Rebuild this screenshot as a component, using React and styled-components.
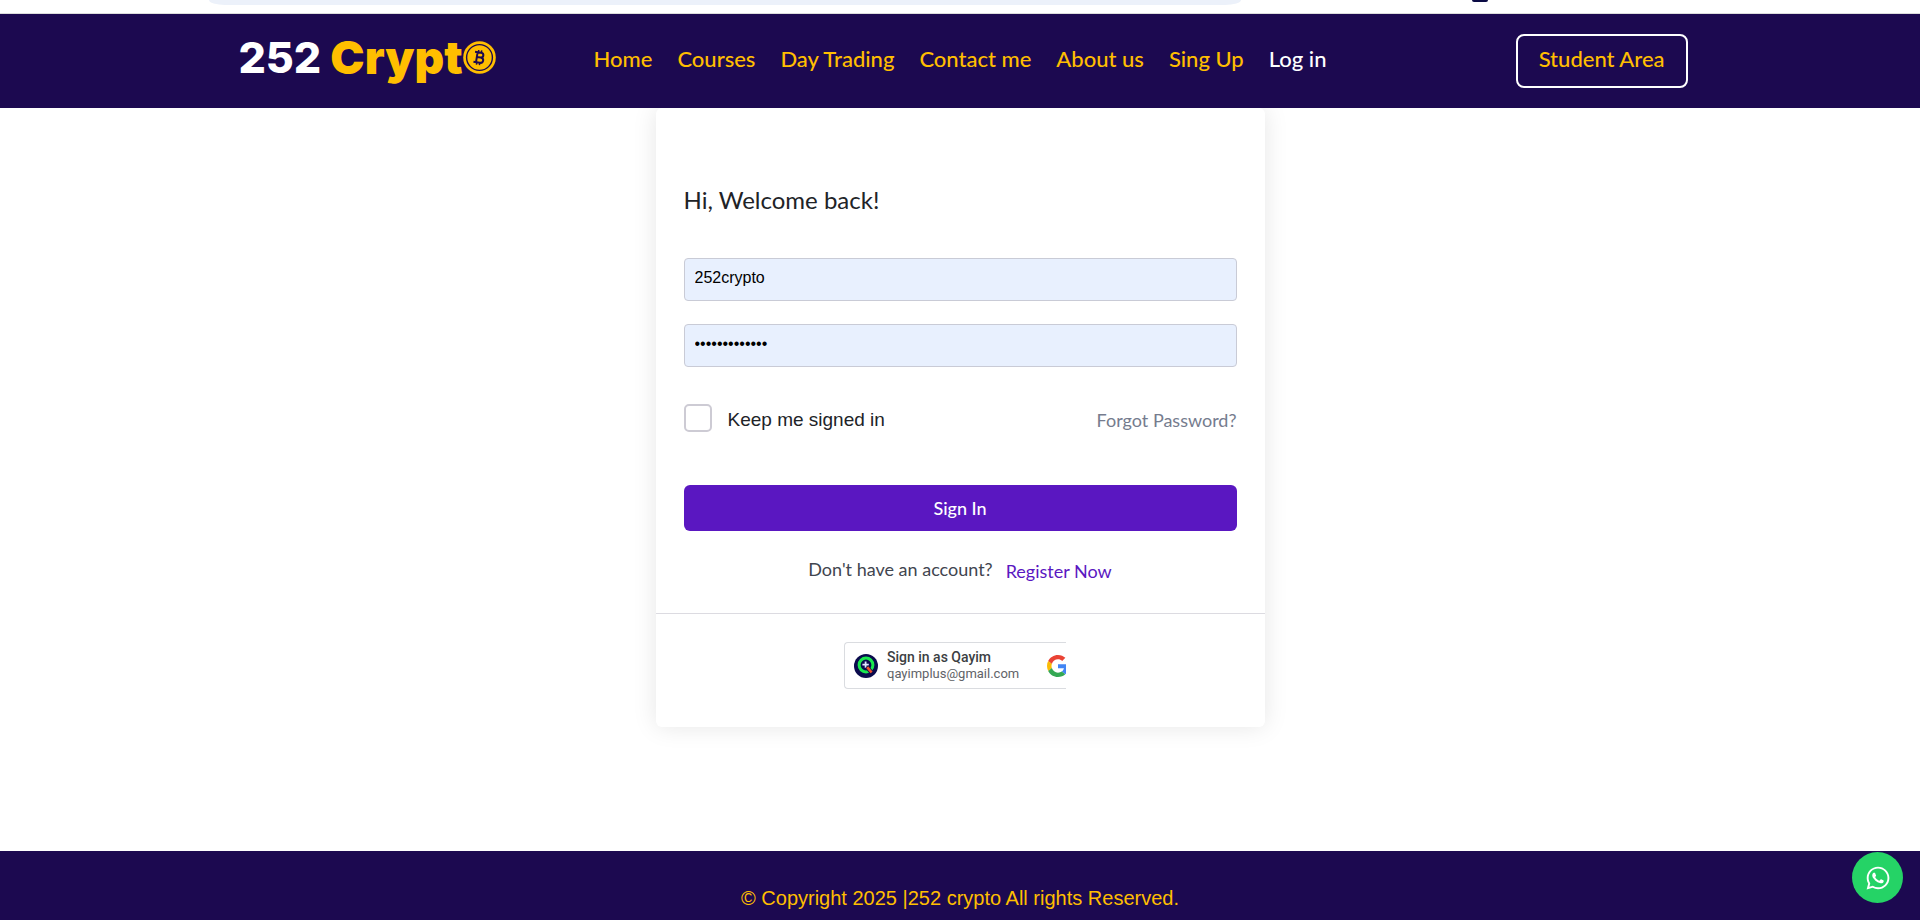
import React from "react";
import styled, { createGlobalStyle } from "styled-components";
import { FaWhatsapp } from "react-icons/fa";

const navy = "#1c0950";
const gold = "#ffbe00";
const violet = "#5a17c1";

const Global = createGlobalStyle`
  *, *::before, *::after { box-sizing: border-box; }
  body { margin: 0; background: #fff; color: #212327; font-family: "Liberation Sans", Arial, sans-serif; }
  a { text-decoration: none; }
  p, h1 { margin: 0; font-weight: 400; }
`;

const Page = styled.div`
  min-height: 100vh;
  display: flex;
  flex-direction: column;
  overflow: hidden;
`;

const TopStrip = styled.div`
  height: 14px;
  display: flex;
  align-items: flex-start;
  padding-left: 209px;
  border-bottom: 1px solid #dcdcdc;
`;

const AddressPill = styled.div`
  width: 1032px;
  height: 5px;
  background: #ecf1fa;
  border-radius: 0 0 16px 16px / 0 0 5px 5px;
`;

const ProfileEdge = styled.div`
  width: 16px;
  height: 2px;
  margin-left: 231px;
  background: #0b0b45;
  border-radius: 0 0 4px 4px;
`;

const Header = styled.header`
  position: relative;
  z-index: 1;
  height: 94px;
  padding: 0 12%;
  display: grid;
  grid-template-columns: 1fr auto 1fr;
  align-items: center;
  background: ${navy};
`;

const Logo = styled.a`
  display: flex;
  align-items: center;
  gap: 9px;
  padding: 0 0 8px 8px;
  color: #fff;
  font: 800 43px/56px Inter, sans-serif;
  white-space: nowrap;
`;

const LogoName = styled.span`
  display: flex;
  align-items: center;
  color: ${gold};
  font-size: 46px;
  font-weight: 900;
`;

const Nav = styled.nav`
  display: flex;
  gap: 25px;
  padding-bottom: 4px;
`;

const NavLink = styled.a`
  color: ${(p) => (p.$active ? "#fff" : gold)};
  font: 500 22px/26px Lato, sans-serif;
  white-space: nowrap;
`;

const StudentLink = styled.a`
  justify-self: end;
  display: flex;
  align-items: center;
  justify-content: center;
  width: 172px;
  height: 54px;
  margin-right: 2px;
  padding-bottom: 4px;
  border: 2px solid #fff;
  border-radius: 8px;
  color: ${gold};
  font: 500 22px/26px Lato, sans-serif;
`;

const Main = styled.main`
  flex: 1;
  display: flex;
  justify-content: center;
  align-items: flex-start;
  padding-bottom: 123px;
`;

const Card = styled.section`
  width: 609px;
  max-width: 100%;
  border-radius: 6px;
  background: #fff;
  box-shadow: 0 0 24px rgba(0, 0, 0, 0.1);
`;

const Form = styled.form`
  display: flex;
  flex-direction: column;
  padding: 76px 28px 26px;
`;

const Title = styled.h1`
  font: 400 24px/32px Lato, sans-serif;
  margin-bottom: 42px;
`;

const Field = styled.input`
  height: 43px;
  margin-bottom: 23px;
  padding: 0 10px 4px;
  border: 1px solid #c9cbd6;
  border-radius: 4px;
  background: #e8f0fe;
  color: #000;
  font: 16px "Liberation Sans", Arial, sans-serif;
`;

const Options = styled.div`
  display: flex;
  align-items: flex-start;
  justify-content: space-between;
  margin: 14px 0 49px;
`;

const Remember = styled.label`
  display: flex;
  align-items: flex-start;
  gap: 16px;
  font-size: 19px;
  line-height: 32px;
`;

const Tick = styled.input`
  appearance: none;
  width: 28px;
  height: 28px;
  margin: 0;
  border: 2px solid #cdcbd4;
  border-radius: 5px;
  background: #fff;
`;

const TextLink = styled.a`
  color: ${(p) => (p.$accent ? violet : "#757c8e")};
  font: 400 18px/32px Lato, sans-serif;
`;

const Submit = styled.button`
  height: 46px;
  border: 0;
  border-radius: 6px;
  background: ${violet};
  color: #fff;
  font: 500 18px Lato, sans-serif;
`;

const Register = styled.p`
  display: flex;
  justify-content: center;
  gap: 13px;
  margin-top: 24px;
  color: #41454f;
  font: 400 18px/28px Lato, sans-serif;
`;

const Social = styled.div`
  display: flex;
  justify-content: center;
  padding: 28px 10px 38px 0;
  border-top: 1px solid #dcdbe1;
`;

const GoogleButton = styled.button`
  display: flex;
  align-items: center;
  width: 222px;
  height: 47px;
  padding: 0 0 0 9px;
  overflow: hidden;
  border: 1px solid #dadce0;
  border-right: 0;
  border-radius: 4px 0 0 4px;
  background: #fff;
  text-align: left;
`;

const Account = styled.span`
  flex: 1;
  display: flex;
  flex-direction: column;
  margin-left: 9px;
  color: #5f6368;
  font: 400 13px/16px Roboto, sans-serif;
  white-space: nowrap;
`;

const AccountName = styled.span`
  color: #3c4043;
  font-weight: 500;
  font-size: 14px;
  line-height: 17px;
`;

const Footer = styled.footer`
  height: 69px;
  padding-top: 35px;
  background: ${navy};
  color: ${gold};
  font-size: 20px;
  line-height: 24px;
  text-align: center;
`;

const Chat = styled.a`
  position: fixed;
  right: 17px;
  bottom: 17px;
  width: 51px;
  height: 51px;
  display: flex;
  align-items: center;
  justify-content: center;
  border-radius: 50%;
  background: #25d366;
  color: #fff;
`;

const Coin = () => (
  <svg width="33" height="33" viewBox="0 0 33 33" aria-hidden="true">
    <circle cx="16.5" cy="16.5" r="16.3" fill={gold} />
    <circle cx="16.5" cy="16.5" r="12.9" fill="none" stroke={navy} strokeWidth="1.4" />
    <g transform="rotate(9 16.5 16.5)" fill="none" stroke={navy} strokeWidth="2">
      <path d="M13.8 11.5v10.2M11.2 11.5h6.2c3.4 0 3.4 4.8 0 4.8h-3.4M17.6 16.3c4 0 4 5.4 0 5.4h-6.4" />
      <path d="M14.6 9.2v2.4M17.6 9.2v2.4M14.6 21.5v2.6M17.6 21.5v2.6" strokeWidth="1.5" />
    </g>
  </svg>
);

const Avatar = () => (
  <svg width="24" height="24" viewBox="0 0 24 24" aria-hidden="true">
    <circle cx="12" cy="12" r="12" fill="#0b0b4d" />
    <circle cx="12" cy="11" r="6.9" fill="none" stroke="#1be84f" strokeWidth="3" />
    <path d="M11.6 7.4v6.4M8.4 10.6h6.4" stroke="#dfe6ff" strokeWidth="1.8" />
    <path d="M12.8 12.8l4.8 5.8" stroke="#0b0b4d" strokeWidth="4.2" />
    <path d="M13.2 13.2l4.4 5.3" stroke="#f2502c" strokeWidth="2.6" />
  </svg>
);

const GoogleMark = () => (
  <svg width="22" height="22" viewBox="0 0 48 48" aria-hidden="true">
    <path fill="#EA4335" d="M24 9.5c3.54 0 6.71 1.22 9.21 3.6l6.85-6.85C35.9 2.38 30.47 0 24 0 14.62 0 6.51 5.38 2.56 13.22l7.98 6.19C12.43 13.72 17.74 9.5 24 9.5z" />
    <path fill="#4285F4" d="M46.98 24.55c0-1.57-.15-3.09-.38-4.55H24v9.02h12.94c-.58 2.96-2.26 5.48-4.78 7.18l7.73 6c4.51-4.18 7.09-10.36 7.09-17.65z" />
    <path fill="#FBBC05" d="M10.53 28.59c-.48-1.45-.76-2.99-.76-4.59s.27-3.14.76-4.59l-7.98-6.19C.92 16.46 0 20.12 0 24c0 3.88.92 7.54 2.56 10.78l7.97-6.19z" />
    <path fill="#34A853" d="M24 48c6.48 0 11.93-2.13 15.89-5.81l-7.73-6c-2.15 1.45-4.92 2.3-8.16 2.3-6.26 0-11.57-4.22-13.47-9.91l-7.98 6.19C6.51 42.62 14.62 48 24 48z" />
  </svg>
);

const MarkSlot = styled.span`
  display: flex;
  width: 19px;
  overflow: hidden;
  svg { flex: none; }
`;

const links = ["Home", "Courses", "Day Trading", "Contact me", "About us", "Sing Up", "Log in"];

export default function App() {
  return (
    <Page>
      <Global />
      <TopStrip>
        <AddressPill />
        <ProfileEdge />
      </TopStrip>
      <Header>
        <Logo href="#home">
          <span>252</span>
          <LogoName>Crypt<Coin /></LogoName>
        </Logo>
        <Nav>
          {links.map((label) => (
            <NavLink key={label} href="#" $active={label === "Log in"}>{label}</NavLink>
          ))}
        </Nav>
        <StudentLink href="#student">Student Area</StudentLink>
      </Header>
      <Main>
        <Card>
          <Form onSubmit={(e) => e.preventDefault()}>
            <Title>Hi, Welcome back!</Title>
            <Field type="text" aria-label="Username" defaultValue="252crypto" />
            <Field type="password" aria-label="Password" defaultValue="252crypto1234" />
            <Options>
              <Remember><Tick type="checkbox" />Keep me signed in</Remember>
              <TextLink href="#forgot">Forgot Password?</TextLink>
            </Options>
            <Submit type="submit">Sign In</Submit>
            <Register>
              Don't have an account?
              <TextLink href="#register" $accent>Register Now</TextLink>
            </Register>
          </Form>
          <Social>
            <GoogleButton type="button">
              <Avatar />
              <Account>
                <AccountName>Sign in as Qayim</AccountName>
                qayimplus@gmail.com
              </Account>
              <MarkSlot><GoogleMark /></MarkSlot>
            </GoogleButton>
          </Social>
        </Card>
      </Main>
      <Footer>© Copyright 2025 |252 crypto All rights Reserved.</Footer>
      <Chat href="#chat" aria-label="WhatsApp"><FaWhatsapp size={26} /></Chat>
    </Page>
  );
}
